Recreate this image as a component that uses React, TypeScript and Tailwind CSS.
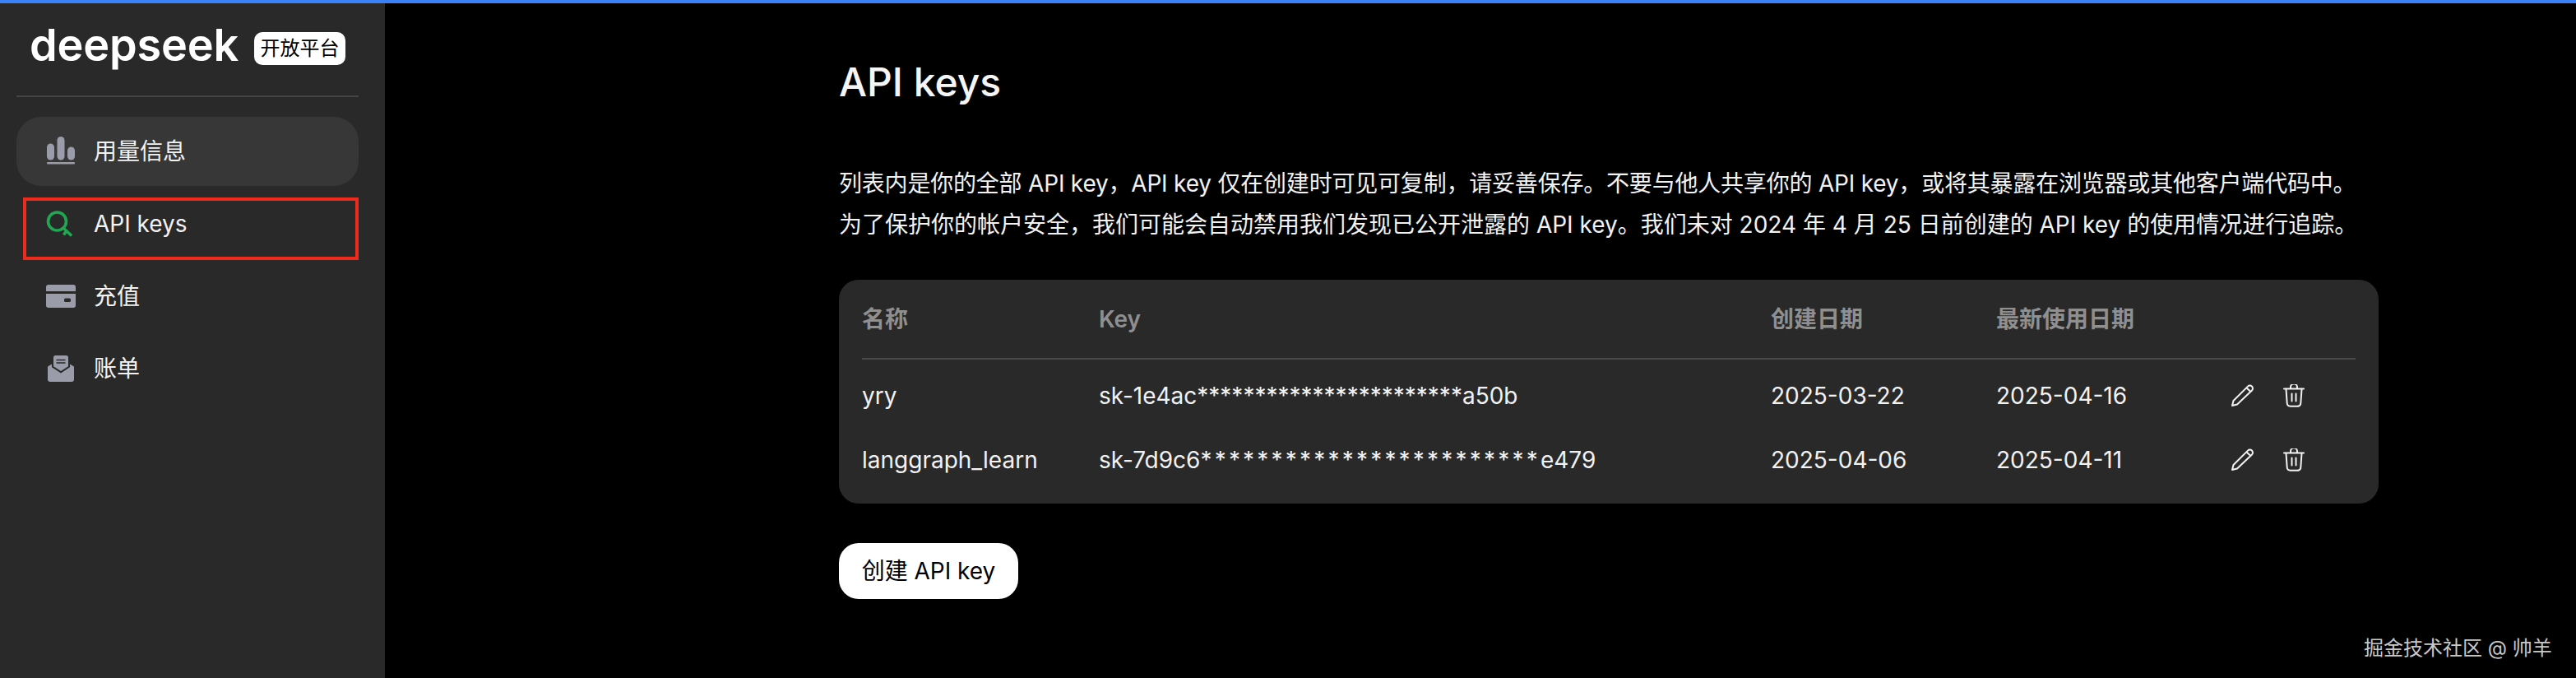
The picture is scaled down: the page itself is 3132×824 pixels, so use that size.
const font = "font-['Inter','Noto_Sans_CJK_SC',sans-serif]"

function UsageIcon() {
  return (
    <svg width="36" height="36" viewBox="0 0 36 36" fill="#9b9ca9">
      <rect x="1" y="8.5" width="9" height="20" rx="4.5" />
      <rect x="13.5" y="0" width="9" height="28.5" rx="4.5" />
      <rect x="26" y="12.5" width="9" height="16" rx="4.5" />
      <rect x="1" y="31" width="34" height="2.5" rx="1" />
    </svg>
  )
}

function KeyIcon() {
  return (
    <svg width="32" height="32" viewBox="0 0 32 32" fill="none" stroke="#22a652">
      <circle cx="13.5" cy="13" r="11" strokeWidth="3.6" />
      <path d="M21 21 L31 30.5" strokeWidth="3.6" />
      <path d="M24.5 25 L21.5 29.5" strokeWidth="3.6" />
    </svg>
  )
}

function CardIcon() {
  return (
    <svg width="36" height="28" viewBox="0 0 36 28">
      <path d="M3 0h30a3 3 0 0 1 3 3v5H0V3a3 3 0 0 1 3-3z" fill="#9b9ca9" />
      <path d="M0 11h36v14a3 3 0 0 1-3 3H3a3 3 0 0 1-3-3z" fill="#9b9ca9" />
      <rect x="22" y="16.5" width="8" height="4.5" rx="1.5" fill="#292929" />
    </svg>
  )
}

function BillIcon() {
  return (
    <svg width="32" height="32" viewBox="0 0 32 32">
      <path d="M7 2.5a2.5 2.5 0 0 1 2.5-2.5h13A2.5 2.5 0 0 1 25 2.5v10.7L16 19 7 13.2z" fill="#9b9ca9" />
      <path d="M0 13.5 5 10.5v3.8L16 21.5l11-7.2v-3.8l5 3V29a3 3 0 0 1-3 3H3a3 3 0 0 1-3-3z" fill="#9b9ca9" />
      <path d="M10.5 5.5h11M10.5 9h11" stroke="#292929" strokeWidth="1.6" />
    </svg>
  )
}

function PencilIcon() {
  return (
    <svg width="28" height="28" viewBox="0 0 28 28" fill="none" stroke="#f2f2f2" strokeWidth="2" strokeLinejoin="round">
      <path d="M2 26 L3.5 20 L21 2.6 A3.3 3.3 0 0 1 26 7.4 L8 24.5 Z" />
      <path d="M19.5 4.5 L24.5 9" />
    </svg>
  )
}

function TrashIcon() {
  return (
    <svg width="26" height="28" viewBox="0 0 26 28" fill="none" stroke="#f2f2f2" strokeWidth="2" strokeLinecap="round">
      <path d="M1 5.5h24" />
      <path d="M9 5V3.5a3.5 3.5 0 0 1 8 0V5" />
      <path d="M3.5 6l1.2 17a4 4 0 0 0 4 3.7h8.6a4 4 0 0 0 4-3.7L22.5 6" />
      <path d="M10.5 11.5v9M15.5 11.5v9" />
    </svg>
  )
}

const rows = [
  { name: 'yry', prefix: 'sk-1e4ac', stars: '***********************', suffix: 'a50b', tracking: '', created: '2025-03-22', used: '2025-04-16' },
  { name: 'langgraph_learn', prefix: 'sk-7d9c6', stars: '************************', suffix: 'e479', tracking: 'tracking-[3.2px]', created: '2025-04-06', used: '2025-04-11' },
]

export default function App() {
  return (
    <div className={`relative flex h-[824px] w-[3132px] flex-col overflow-hidden bg-black text-white ${font}`}>
      <div className="h-1 shrink-0 bg-[#3b82f6]" />
      <div className="flex min-h-0 flex-1">
        {/* Sidebar */}
        <aside className="w-[468px] shrink-0 bg-[#292929] pl-5 pr-8">
          <div className="flex h-[112px] items-start pl-4 pt-[25px]">
            <span className="w-[250px] text-[54px] leading-[52px] font-semibold tracking-[-0.2px] text-white">
              deepseek
            </span>
            <span className="ml-[23px] mt-[10px] flex h-10 w-[111px] items-center justify-center rounded-[10px] bg-white text-[24px] leading-none text-black">
              开放平台
            </span>
          </div>
          <div className="h-0.5 bg-[#444444]" />
          <nav className="mt-6 flex flex-col">
            <a className="flex h-[84px] items-center rounded-[30px] bg-[#373737] pl-[36px] text-[28px] text-[#f2f2f2]">
              <span className="flex w-[58px] shrink-0"><UsageIcon /></span>
              用量信息
            </a>
            <a className="ml-2 mt-[14px] mb-[2px] flex h-[76px] items-center border-4 border-[#ee2a1c] pb-[12px] pl-[24px] text-[28px] text-[#f2f2f2]">
              <span className="flex w-[58px] shrink-0"><KeyIcon /></span>
              API keys
            </a>
            <a className="flex h-[84px] items-center pl-[36px] text-[28px] text-[#f2f2f2]">
              <span className="flex w-[58px] shrink-0"><CardIcon /></span>
              充值
            </a>
            <a className="mt-1 flex h-[84px] items-center pl-[38px] text-[28px] text-[#f2f2f2]">
              <span className="flex w-[56px] shrink-0"><BillIcon /></span>
              账单
            </a>
          </nav>
        </aside>

        {/* Main */}
        <main className="flex-1 pl-[554px]">
          <div className="-ml-0.5 w-[1872px]">
            <h1 className="mt-[66px] text-[48px] leading-[60px] font-medium text-[#f5f5f5]">API keys</h1>
            <p className="mt-[68px] whitespace-nowrap text-[28px] leading-[50px] text-[#f2f2f2]">
              <span className="tracking-[-0.2px]">
                列表内是你的全部 API key，API key 仅在创建时可见可复制，请妥善保存。不要与他人共享你的 API key，或将其暴露在浏览器或其他客户端代码中。
              </span>
              <br />
              为了保护你的帐户安全，我们可能会自动禁用我们发现已公开泄露的 API key。我们未对 2024 年 4 月 25 日前创建的 API key 的使用情况进行追踪。
            </p>

            <div className="mt-[42px] h-[272px] rounded-3xl bg-[#292929] px-7">
              <table className="w-full table-fixed text-left text-[28px]">
                <thead>
                  <tr className="h-[96px] border-b-2 border-[#4a4a4a] text-[#8f8f8f]">
                    <th className="w-[288px] font-semibold">名称</th>
                    <th className="w-[817px] font-semibold">Key</th>
                    <th className="w-[274px] font-semibold">创建日期</th>
                    <th className="w-[284px] font-semibold">最新使用日期</th>
                    <th />
                  </tr>
                </thead>
                <tbody className="text-[#f2f2f2]">
                  {rows.map((row, i) => (
                    <tr key={row.name} className={i === 0 ? 'h-[88px]' : 'h-[70px]'}>
                      <td>{row.name}</td>
                      <td>
                        {row.prefix}
                        <span className={row.tracking}>{row.stars}</span>
                        {row.suffix}
                      </td>
                      <td>{row.created}</td>
                      <td>{row.used}</td>
                      <td>
                        <div className="ml-px flex items-center gap-[36px]">
                          <PencilIcon />
                          <TrashIcon />
                        </div>
                      </td>
                    </tr>
                  ))}
                </tbody>
              </table>
            </div>

            <button className="mt-12 flex h-[68px] w-[218px] items-center justify-center rounded-3xl bg-white text-[28px] text-black">
              创建 API key
            </button>
          </div>
        </main>
      </div>

      <span className="absolute left-[2874px] top-[774px] text-[24px] leading-[28px] text-[#c8c8c8]">掘金技术社区 @ 帅羊</span>
    </div>
  )
}
